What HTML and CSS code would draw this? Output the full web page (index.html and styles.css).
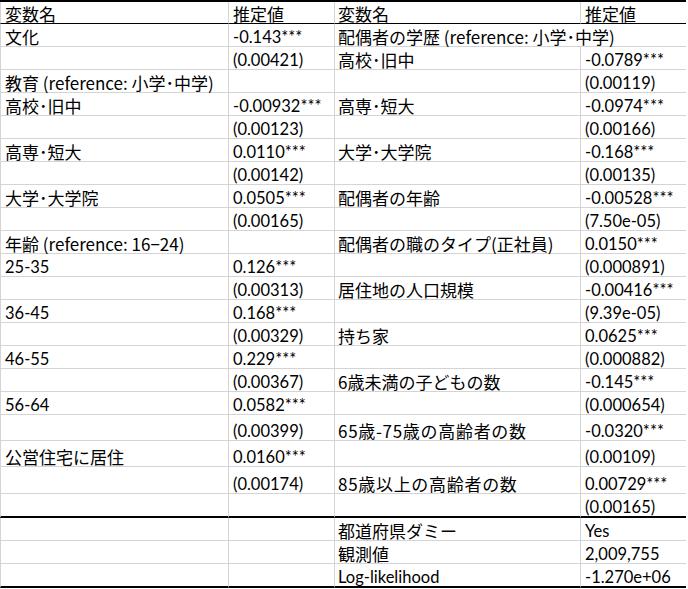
FILE: index.html
```html
<!DOCTYPE html>
<html lang="ja">
<head>
<meta charset="utf-8">
<title>推定結果</title>
<link rel="stylesheet" href="styles.css">
</head>
<body>
<table class="res">
  <colgroup>
    <col class="c1"><col class="c2"><col class="c3"><col class="c4">
  </colgroup>
  <tr class="head"><td class="jp">変数名</td><td class="jp">推定値</td><td class="jp">変数名</td><td class="jp">推定値</td></tr>
  <tr><td class="jp">文化</td><td>-0.143***</td><td class="jp" colspan="2">配偶者の学歴 (reference: 小学･中学)</td></tr>
  <tr><td></td><td>(0.00421)</td><td class="jp">高校･旧中</td><td>-0.0789***</td></tr>
  <tr><td class="jp">教育 (reference: 小学･中学)</td><td></td><td></td><td>(0.00119)</td></tr>
  <tr><td class="jp">高校･旧中</td><td>-0.00932***</td><td class="jp">高専･短大</td><td>-0.0974***</td></tr>
  <tr><td></td><td>(0.00123)</td><td></td><td>(0.00166)</td></tr>
  <tr><td class="jp">高専･短大</td><td>0.0110***</td><td class="jp">大学･大学院</td><td>-0.168***</td></tr>
  <tr><td></td><td>(0.00142)</td><td></td><td>(0.00135)</td></tr>
  <tr><td class="jp">大学･大学院</td><td>0.0505***</td><td class="jp">配偶者の年齢</td><td>-0.00528***</td></tr>
  <tr><td></td><td>(0.00165)</td><td></td><td>(7.50e-05)</td></tr>
  <tr><td class="jp">年齢 (reference: 16−24)</td><td></td><td class="jp">配偶者の職のタイプ(正社員)</td><td>0.0150***</td></tr>
  <tr><td>25-35</td><td>0.126***</td><td></td><td>(0.000891)</td></tr>
  <tr><td></td><td>(0.00313)</td><td class="jp">居住地の人口規模</td><td>-0.00416***</td></tr>
  <tr><td>36-45</td><td>0.168***</td><td></td><td>(9.39e-05)</td></tr>
  <tr><td></td><td>(0.00329)</td><td class="jp">持ち家</td><td>0.0625***</td></tr>
  <tr><td>46-55</td><td>0.229***</td><td></td><td>(0.000882)</td></tr>
  <tr><td></td><td>(0.00367)</td><td class="jp">6歳未満の子どもの数</td><td>-0.145***</td></tr>
  <tr><td>56-64</td><td>0.0582***</td><td></td><td>(0.000654)</td></tr>
  <tr class="tall"><td></td><td>(0.00399)</td><td class="jp alt">65歳-75歳の高齢者の数</td><td>-0.0320***</td></tr>
  <tr class="tall"><td class="jp">公営住宅に居住</td><td>0.0160***</td><td></td><td>(0.00109)</td></tr>
  <tr class="taller"><td></td><td>(0.00174)</td><td class="jp alt">85歳以上の高齢者の数</td><td>0.00729***</td></tr>
  <tr class="sep"><td></td><td></td><td></td><td>(0.00165)</td></tr>
  <tr><td></td><td></td><td class="jp">都道府県ダミー</td><td>Yes</td></tr>
  <tr><td></td><td></td><td class="jp">観測値</td><td>2,009,755</td></tr>
  <tr class="last"><td></td><td></td><td>Log-likelihood</td><td>-1.270e+06</td></tr>
</table>
</body>
</html>
```

FILE: styles.css
```css
html, body {
  margin: 0;
  padding: 0;
  background: #ffffff;
}

.res {
  border-collapse: separate;
  border-spacing: 0;
  table-layout: fixed;
  width: 686px;
  border-top: 2px solid #000;
  color: #000;
  font-family: "Lato", "Noto Sans CJK JP", sans-serif;
  font-size: 16.5px;
}

.c1 { width: 229px; }
.c2 { width: 106px; }
.c3 { width: 246px; }
.c4 { width: 105px; }

.res td {
  box-sizing: border-box;
  height: 23px;
  padding: 0 0 0 4px;
  border-right: 1px solid #d4d4d4;
  border-bottom: 1px solid #d4d4d4;
  white-space: nowrap;
  overflow: visible;
  vertical-align: bottom;
  line-height: 18px;
}

.res td:first-child {
  border-left: 1px solid #d4d4d4;
  padding-left: 4px;
}

.res td:nth-child(3) {
  padding-left: 3px;
}

.res td:last-child {
  border-right: none;
}

.res .jp {
  font-family: "Noto Sans CJK JP", sans-serif;
  font-size: 17px;
  line-height: 19px;
}

.res .alt {
  letter-spacing: 0.7px;
}

.res .head td {
  height: 22px;
  border-bottom: 1px solid #000;
}

.res .tall td {
  height: 26px;
}

.res .taller td {
  height: 27px;
}

.res .sep td {
  height: 24px;
  border-bottom: 2px solid #000;
}

.res .last td {
  height: 24px;
  border-bottom: 2px solid #000;
}
```
